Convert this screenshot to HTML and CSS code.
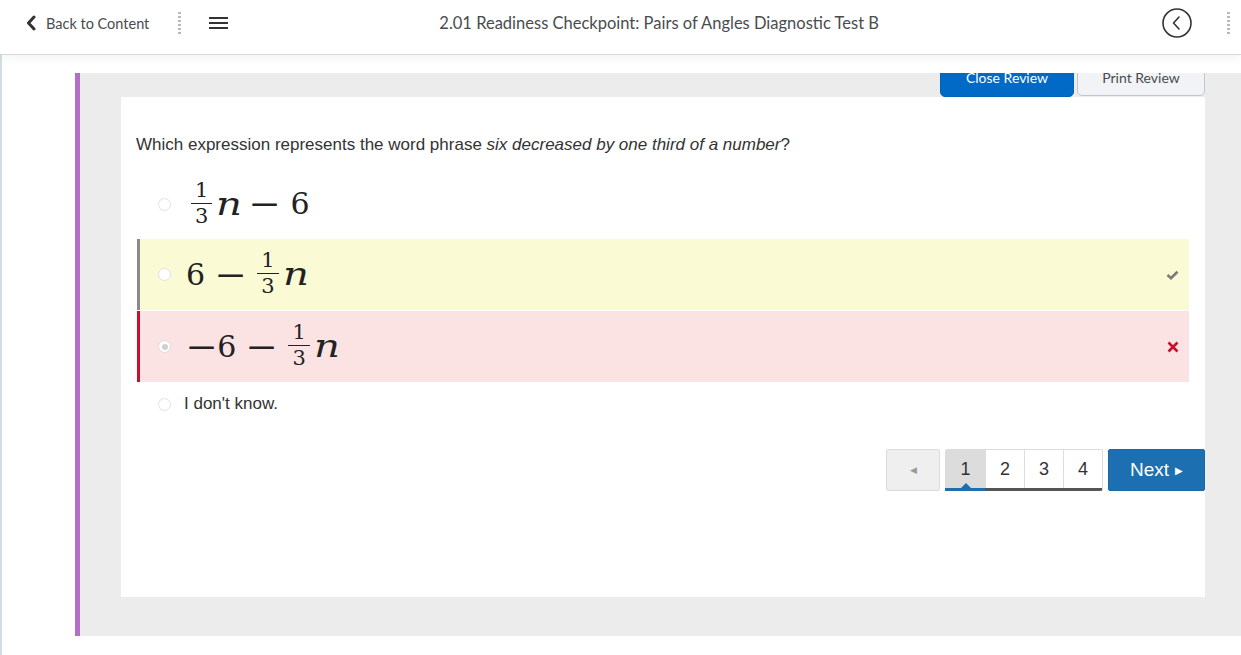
FILE: index.html
```html
<!DOCTYPE html>
<html lang="en">
<head>
<meta charset="utf-8">
<title>2.01 Readiness Checkpoint</title>
<link rel="stylesheet" href="styles.css">
</head>
<body>
<header class="topbar">
  <a class="back" href="#">
    <svg class="back-chev" width="12" height="16" viewBox="0 0 12 16"><path d="M9 2 L3.5 8 L9 14" fill="none" stroke="#333" stroke-width="3" stroke-linecap="round" stroke-linejoin="round"/></svg>
    <span>Back to Content</span>
  </a>
  <span class="vdots"></span>
  <span class="hamburger"><i></i><i></i><i></i></span>
  <h1 class="title">2.01 Readiness Checkpoint: Pairs of Angles Diagnostic Test B</h1>
  <span class="circle-btn">
    <svg width="32" height="32" viewBox="0 0 32 32"><circle cx="16" cy="16" r="14" fill="none" stroke="#333" stroke-width="1.6"/><path d="M18 10 L12.5 16 L18 22" fill="none" stroke="#333" stroke-width="1.6" stroke-linecap="round" stroke-linejoin="round"/></svg>
  </span>
  <span class="vdots vdots-right"></span>
</header>

<main class="page">
  <section class="panel">
    <div class="review-bar">
      <button class="btn-close">Close Review</button>
      <button class="btn-print">Print Review</button>
    </div>
    <div class="card">
      <p class="question">Which expression represents the word phrase <em>six decreased by one third of a number</em>?</p>
      <div class="options">
        <div class="opt opt-1">
          <span class="radio"></span>
          <span class="math"><span class="frac"><span class="num">1</span><span class="den">3</span></span><i class="var">n</i><span class="op">−</span><span>6</span></span>
        </div>
        <div class="opt opt-correct">
          <span class="radio"></span>
          <span class="math"><span>6</span><span class="op">−</span><span class="frac"><span class="num">1</span><span class="den">3</span></span><i class="var">n</i></span>
          <svg class="mark" width="13" height="10" viewBox="0 0 13 10"><path d="M1.5 5 L5 8.2 L11.5 1.8" fill="none" stroke="#7a7a7a" stroke-width="2.6" stroke-linejoin="miter"/></svg>
        </div>
        <div class="opt opt-wrong">
          <span class="radio checked"></span>
          <span class="math"><span class="op-neg">−</span><span>6</span><span class="op">−</span><span class="frac"><span class="num">1</span><span class="den">3</span></span><i class="var">n</i></span>
          <svg class="mark" width="12" height="12" viewBox="0 0 12 12"><path d="M1.5 1.5 L10.5 10.5 M10.5 1.5 L1.5 10.5" fill="none" stroke="#c8102e" stroke-width="2.6"/></svg>
        </div>
        <div class="opt opt-text">
          <span class="radio"></span>
          <span class="plain">I don't know.</span>
        </div>
      </div>
      <nav class="pager">
        <button class="prev">◀</button>
        <div class="pages">
          <span class="pg active">1</span>
          <span class="pg">2</span>
          <span class="pg">3</span>
          <span class="pg">4</span>
        </div>
        <button class="next">Next <span class="tri">▶</span></button>
      </nav>
    </div>
  </section>
</main>
</body>
</html>
```

FILE: styles.css
```css
* { box-sizing: border-box; }
html, body { margin: 0; padding: 0; background: #fff; }
body { font-family: "Liberation Sans", Arial, sans-serif; color: #333; height: 655px; overflow: hidden; }

.topbar {
  position: relative;
  z-index: 2;
  height: 55px;
  display: flex;
  align-items: center;
  padding-bottom: 8px;
  background: #fff;
  border-bottom: 1px solid #d9d9d9;
  box-shadow: 0 3px 10px rgba(0, 0, 0, 0.05);
  font-family: Lato, "Open Sans", sans-serif;
  color: #494c4e;
}
.back {
  display: flex;
  align-items: center;
  margin-left: 25px;
  color: #494c4e;
  text-decoration: none;
  font-size: 14.5px;
}
.back-chev { margin-right: 9px; }
.vdots {
  width: 3px;
  height: 24px;
  margin-left: 29px;
  background-image: radial-gradient(circle, #b5b5b5 1.1px, transparent 1.3px);
  background-size: 3px 4px;
  background-repeat: repeat-y;
}
.hamburger {
  display: flex;
  flex-direction: column;
  gap: 3px;
  width: 19px;
  margin-left: 28px;
}
.hamburger i { display: block; height: 2px; background: #333; }
.title {
  margin: 0 0 0 211px;
  font-size: 16.5px;
  font-weight: normal;
  color: #494c4e;
  white-space: nowrap;
}
.circle-btn { margin-left: auto; display: flex; }
.vdots-right { margin-left: 34px; margin-right: 11px; }

.page {
  height: 600px;
  border-left: 2px solid #d3dde8;
  padding: 18px 0 0 73px;
}
.panel {
  height: 563px;
  background: #ececec;
  border-left: 5px solid #b36fc6;
  padding: 0 36px 39px 41px;
  display: flex;
  flex-direction: column;
}
.review-bar {
  height: 24px;
  overflow: hidden;
  display: flex;
  justify-content: flex-end;
  align-items: flex-start;
  gap: 3px;
}
.review-bar button {
  font-family: Lato, "Open Sans", sans-serif;
  font-size: 14px;
  height: 40px;
  margin-top: -16px;
  padding: 1px 0 0;
  border-radius: 0 0 5px 5px;
  cursor: pointer;
}
.btn-close {
  width: 134px;
  background: #006ac6;
  color: #fff;
  border: 1px solid #0062b8;
}
.btn-print {
  width: 128px;
  background: #f1f3f6;
  color: #494c4e;
  border: 1px solid #c3c6cb;
  height: 39px !important;
}

.card {
  flex: 1;
  background: #fff;
  padding: 36px 0 0 15px;
}
.question {
  margin: 0;
  font-size: 17px;
  line-height: 24px;
  color: #333;
}
.question em { font-style: italic; }

.options {
  margin: 13px 16px 0 1px;
  display: flex;
  flex-direction: column;
  gap: 1px;
}
.opt {
  display: flex;
  align-items: center;
  height: 71px;
  border-left: 3px solid transparent;
  padding: 0 10px 0 18px;
}
.opt-1 { height: 68px; }
.opt-correct { background: #fafad4; border-left-color: #8a8a8a; }
.opt-wrong { background: #fbe3e4; border-left-color: #c8102e; }
.opt-text { height: 42px; }

.radio {
  width: 13px;
  height: 13px;
  border-radius: 50%;
  border: 1px solid #e2e2e2;
  background: #fff;
  flex: none;
  margin-right: 15px;
  position: relative;
}
.radio.checked { border-color: #dcdcdc; }
.radio.checked::after {
  content: "";
  position: absolute;
  left: 2.5px; top: 2.5px;
  width: 6px; height: 6px;
  border-radius: 50%;
  background: #d0d0d0;
}

.math {
  font-family: "DejaVu Serif", "Liberation Serif", serif;
  font-size: 30px;
  color: #222;
  display: flex;
  align-items: center;
  line-height: 1;
  white-space: nowrap;
}
.opt-1 .math { margin-left: 4px; }
.math .var {
  display: inline-block;
  font-style: italic;
  font-size: 31px;
  margin-left: 3px;
  margin-right: 6px;
  transform: scaleX(1.3);
  transform-origin: left center;
}
.math .op,
.math .op-neg {
  display: inline-block;
  transform: scaleX(1.3);
}
.math .op { margin: 0 13px; }
.math .op-neg { margin: 0 3px 0 3px; }
.opt-1 .math .var { margin-right: 3px; }
.frac {
  display: inline-flex;
  flex-direction: column;
  align-items: center;
  font-size: 21px;
  line-height: 1;
  margin: -2px 1px 0;
}
.frac .num {
  padding: 0 4px 2px;
  border-bottom: 1.5px solid #222;
}
.frac .den { padding-top: 2px; }

.mark { margin-left: auto; }
.plain { font-size: 17px; color: #333; margin-left: -2px; }

.pager {
  display: flex;
  justify-content: flex-end;
  gap: 5px;
  margin-top: 24px;
  height: 42px;
}
.pager button { font-family: "Liberation Sans", Arial, sans-serif; cursor: pointer; }
.prev {
  width: 54px;
  height: 42px;
  background: #efefef;
  border: 1px solid #dcdcdc;
  border-radius: 2px;
  color: #9a9a9a;
  font-size: 9px;
}
.pages {
  display: flex;
  height: 42px;
  border: 1px solid #dcdcdc;
  border-bottom: 3px solid #555;
  border-radius: 2px 2px 3px 3px;
}
.pg {
  width: 39px;
  height: 38px;
  display: flex;
  align-items: center;
  justify-content: center;
  font-size: 18px;
  color: #333;
  border-left: 1px solid #dedede;
  position: relative;
}
.pg:first-child { border-left: none; }
.pg.active { background: #dcdcdc; }
.pg.active::before {
  content: "";
  position: absolute;
  left: -1px;
  right: 0;
  bottom: -3px;
  height: 3px;
  background: #1f6fb0;
}
.pg.active::after {
  content: "";
  position: absolute;
  left: 50%;
  bottom: 0;
  margin-left: -5px;
  border-left: 5px solid transparent;
  border-right: 5px solid transparent;
  border-bottom: 5px solid #1f6fb0;
}
.next {
  width: 97px;
  height: 42px;
  background: #1c6fb1;
  border: 1px solid #1a68a6;
  border-radius: 2px;
  color: #fff;
  font-size: 19px;
  display: flex;
  align-items: center;
  justify-content: center;
  gap: 6px;
}
.next .tri { font-size: 10px; }
```
